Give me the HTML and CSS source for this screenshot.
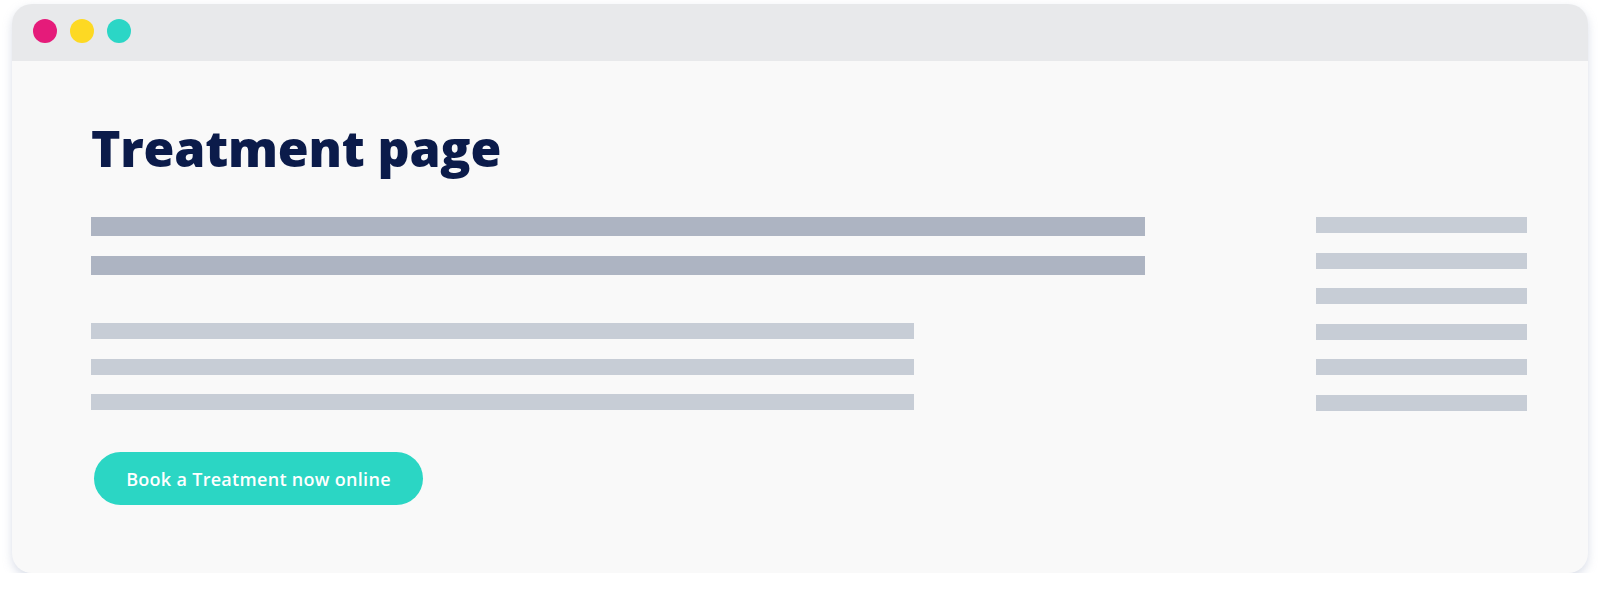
FILE: index.html
```html
<!DOCTYPE html>
<html lang="en">
<head>
    <meta charset="UTF-8">
    <meta name="viewport" content="width=device-width, initial-scale=1.0">
    <title>Treatment page</title>
    <link rel="stylesheet" href="styles.css">
</head>
<body>

    <div class="window">
        <div class="titlebar">
            <span class="dot dot-pink"></span>
            <span class="dot dot-yellow"></span>
            <span class="dot dot-teal"></span>
        </div>

        <div class="content">
            <h1>Treatment page</h1>

            <div class="columns">
                <div class="main">
                    <div class="bar bar-dark"></div>
                    <div class="bar bar-dark"></div>

                    <div class="text-lines">
                        <div class="bar bar-light"></div>
                        <div class="bar bar-light"></div>
                        <div class="bar bar-light"></div>
                    </div>

                    <button class="btn-book">Book a Treatment now online</button>
                </div>

                <div class="side">
                    <div class="bar bar-light"></div>
                    <div class="bar bar-light"></div>
                    <div class="bar bar-light"></div>
                    <div class="bar bar-light"></div>
                    <div class="bar bar-light"></div>
                    <div class="bar bar-light"></div>
                </div>
            </div>
        </div>
    </div>

</body>
</html>
```

FILE: styles.css
```css
body {
    margin: 0;
    padding: 4px 12px 0 12px;
    background-color: #ffffff;
    font-family: "Open Sans", Arial, sans-serif;
}
.window {
    width: 1576px;
    height: 569px;
    background-color: #f9f9f9;
    border-radius: 20px;
    overflow: hidden;
    box-shadow: 0px 4px 10px rgba(150, 160, 190, 0.35);
}
.titlebar {
    height: 57px;
    background-color: #e8e9eb;
    display: flex;
    align-items: flex-start;
    gap: 13px;
    padding: 15px 0 0 21px;
    box-sizing: border-box;
}
.dot {
    width: 24px;
    height: 24px;
    border-radius: 50%;
}
.dot-pink {
    background-color: #e51b7a;
}
.dot-yellow {
    background-color: #fdd923;
}
.dot-teal {
    background-color: #2bd6c6;
}
.content {
    padding: 0 61px 0 79px;
}
h1 {
    margin: 0;
    padding-top: 62px;
    height: 96px;
    box-sizing: border-box;
    font-size: 50px;
    line-height: 50px;
    font-weight: 800;
    color: #0b1b4a;
    letter-spacing: -0.2px;
}
.columns {
    display: flex;
    justify-content: space-between;
    padding-top: 60px;
}
.main {
    width: 1054px;
}
.bar {
    height: 16px;
}
.bar-dark {
    height: 19px;
    background-color: #adb4c2;
    margin-bottom: 20px;
}
.bar-light {
    background-color: #c7cdd6;
}
.text-lines {
    width: 823px;
    display: flex;
    flex-direction: column;
    gap: 19.5px;
    margin-top: 48px;
}
.side {
    width: 211px;
    display: flex;
    flex-direction: column;
    gap: 19.5px;
}
.btn-book {
    margin: 42px 0 0 3px;
    width: 329px;
    height: 53px;
    border: none;
    border-radius: 27px;
    background-color: #2bd6c4;
    color: white;
    font-family: "Open Sans", Arial, sans-serif;
    font-size: 18px;
    font-weight: 600;
    letter-spacing: 0.3px;
    cursor: pointer;
}
```
